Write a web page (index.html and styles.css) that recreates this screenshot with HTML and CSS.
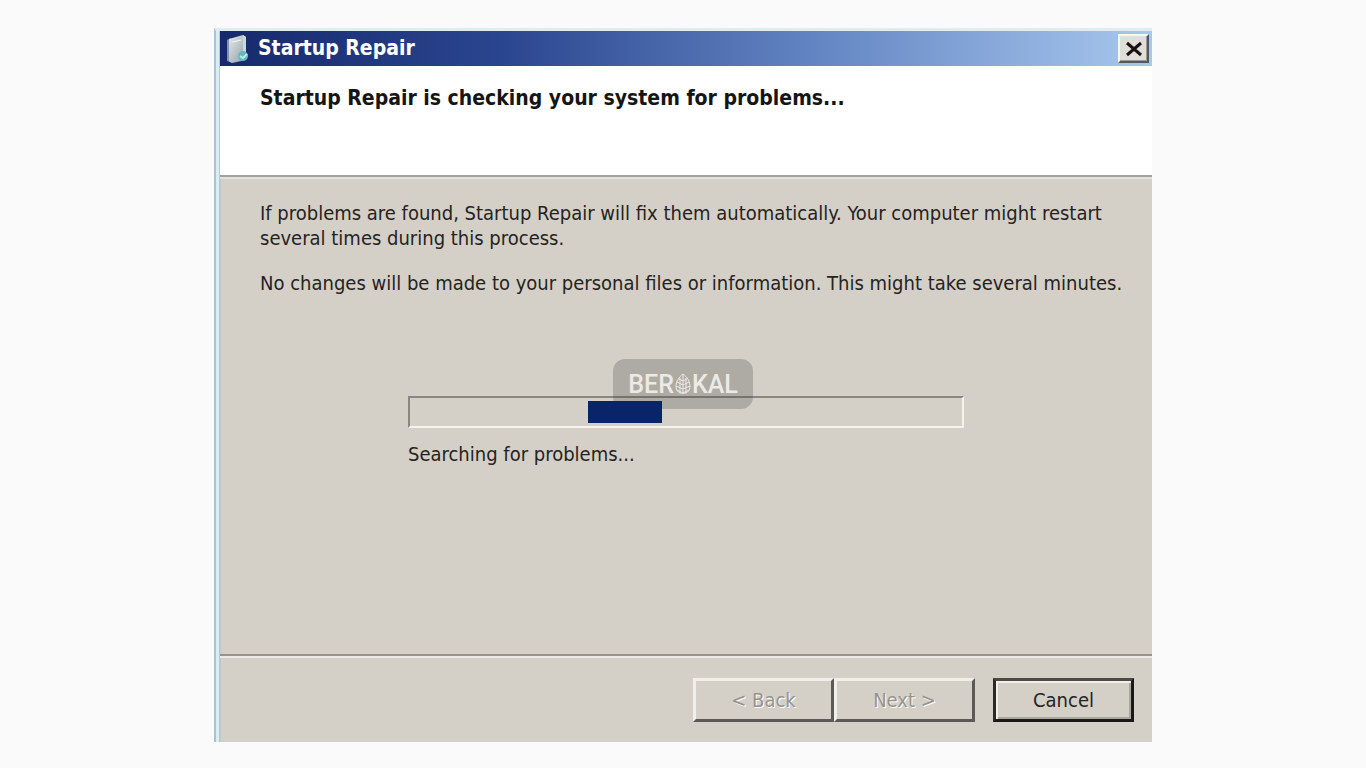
FILE: index.html
```html
<!DOCTYPE html>
<html lang="en">
<head>
    <meta charset="UTF-8">
    <meta name="viewport" content="width=device-width, initial-scale=1.0">
    <title>Startup Repair</title>
    <link rel="stylesheet" href="styles.css">
</head>
<body>
    <main class="window">
        <header class="title-bar">
            <svg class="app-icon" viewBox="0 0 24 30" aria-hidden="true">
                <defs>
                    <linearGradient id="case-front" x1="0" y1="0" x2="1" y2="1">
                        <stop offset="0" stop-color="#e4e9e8"/>
                        <stop offset="1" stop-color="#8f9da8"/>
                    </linearGradient>
                </defs>
                <path d="M1 6 L5 4 L6 29 L1 27 Z" fill="#8093a8"/>
                <path d="M3 5 L17 1 L20 3 L20 26 L6 29 L3 27 Z" fill="url(#case-front)"/>
                <path d="M17 1 L20 3 L20 25 L17 26 Z" fill="#c3dcda"/>
                <path d="M6 8 L15 6" stroke="#f5f7f6" stroke-width="1"/>
                <circle cx="17" cy="22" r="5" fill="#62b9c5"/>
                <path d="M14 22 L17 24 L21 20" fill="none" stroke="#b9eee8" stroke-width="2"/>
            </svg>
            <h1 class="title">Startup Repair</h1>
            <button class="close-btn" type="button" aria-label="Close">
                <svg viewBox="0 0 16 16" aria-hidden="true">
                    <path d="M1 2 L15 14 M15 2 L1 14" stroke="#1a1010" stroke-width="3"/>
                </svg>
            </button>
        </header>
        <section class="banner">
            <h2>Startup Repair is checking your system for problems...</h2>
        </section>
        <section class="content">
            <p>If problems are found, Startup Repair will fix them automatically. Your computer might restart several times during this process.</p>
            <p>No changes will be made to your personal files or information. This might take several minutes.</p>
            <div class="status">
                <div class="progress" role="progressbar" aria-labelledby="status-text">
                    <div class="progress-chunk"></div>
                </div>
                <p id="status-text">Searching for problems...</p>
            </div>
        </section>
        <footer class="actions">
            <div class="wizard-nav">
                <button class="btn" type="button" disabled>&lt; Back</button>
                <button class="btn" type="button" disabled>Next &gt;</button>
            </div>
            <button class="btn btn-default" type="button">Cancel</button>
        </footer>
    </main>
    <div class="watermark">
        <span>BER</span>
        <svg viewBox="0 0 18 22" aria-hidden="true">
            <g fill="none" stroke="currentColor" stroke-width="1">
                <path d="M9 1 C5 4 2 8 2 14 C2 17 4 19 6 20 H12 C14 19 16 17 16 14 C16 8 13 4 9 1 Z"/>
                <path d="M9 1 V21 M6 5 V20 M12 5 V20"/>
                <path d="M9 8 L5 6 M9 8 L13 6 M9 12 L3 9 M9 12 L15 9 M9 16 L2 13 M9 16 L16 13 M9 20 L3 17 M9 20 L15 17"/>
            </g>
        </svg>
        <span>KAL</span>
    </div>
</body>
</html>
```

FILE: styles.css
```css
* {
    box-sizing: border-box;
}
body {
    display: flex;
    flex-direction: column;
    align-items: center;
    min-height: 100vh;
    margin: 0;
    padding: 28px 16px 26px;
    background-color: #fafafa;
    color: #26231f;
    font-family: Tahoma, "DejaVu Sans Condensed", "DejaVu Sans", sans-serif;
    font-stretch: condensed;
    font-size: 20px;
    line-height: 25px;
}
h1, h2, p {
    margin: 0;
}
button {
    font: inherit;
    color: inherit;
}
.window {
    display: flex;
    flex: 1;
    flex-direction: column;
    width: 100%;
    max-width: 938px;
    background-color: #d4d0c8;
    border-top: 3px solid #dfedf3;
    border-left: 2px solid #a9c3d6;
    box-shadow: inset 3px 0 #dcecf3, inset 5px 0 #b8cccf;
    padding-left: 4px;
}

/* Title bar */
.title-bar {
    display: flex;
    align-items: center;
    gap: 8px;
    height: 35px;
    padding: 0 3px 0 6px;
    background: linear-gradient(to right, #16296c, #2a458f 30%, #6587c4 65%, #a8c8ee);
    color: #fff;
}
.app-icon {
    width: 24px;
    height: 30px;
}
.title {
    flex: 1;
    font-size: 21px;
}
.close-btn {
    display: flex;
    align-items: center;
    justify-content: center;
    width: 31px;
    height: 29px;
    padding: 0;
    background-color: #e0ded9;
    border: 2px solid;
    border-color: #f6f6f3 #55585f #55585f #f6f6f3;
    box-shadow: inset -1px -1px #9a9a98;
}
.close-btn svg {
    width: 16px;
    height: 16px;
}

.banner {
    min-height: 111px;
    padding: 20px 40px;
    background-color: #fff;
    border-bottom: 2px solid #a3a09a;
}
.banner h2 {
    color: #151515;
    font-size: 21px;
}

/* Content */
.content {
    display: flex;
    flex: 1;
    flex-direction: column;
    gap: 20px;
    padding: 22px 24px 22px 40px;
    border-top: 2px solid #e4e1db;
}
.status {
    display: flex;
    flex-direction: column;
    gap: 14px;
    width: 64%;
    margin: 80px 0 0 148px;
}
.progress {
    height: 32px;
    padding: 3px 0 3px 32%;
    border: 2px solid;
    border-color: #8a8780 #f5f3ef #f5f3ef #8a8780;
}
.progress-chunk {
    position: relative;
    z-index: 2;
    width: 74px;
    height: 22px;
    background-color: #0a246a;
}

/* Buttons */
.actions {
    display: flex;
    justify-content: flex-end;
    gap: 18px;
    padding: 22px 18px 20px;
    border-top: 2px solid #96938c;
    box-shadow: inset 0 2px #eceae4;
}
.wizard-nav {
    display: flex;
}
.btn {
    width: 141px;
    height: 44px;
    padding: 0;
    background-color: #d4d0c8;
    border: 3px solid;
    border-color: #f1efea #5c5a54 #5c5a54 #f1efea;
}
.btn:disabled {
    color: #96938c;
    text-shadow: 1px 1px #fff;
}
.btn-default {
    border-color: #4c4a45 #1a1917 #1a1917 #2c2a27;
    box-shadow: inset 2px 2px #f1efea, inset -2px -2px #aaa79f;
}

.watermark {
    position: absolute;
    top: 50%;
    left: 50%;
    transform: translate(-50%, -50%);
    display: flex;
    align-items: center;
    justify-content: center;
    width: 140px;
    height: 50px;
    border-radius: 12px;
    background-color: rgba(60, 60, 55, 0.25);
    color: #eceae5;
    font-family: Roboto, sans-serif;
    font-stretch: normal;
    font-size: 25px;
    font-weight: 500;
}
.watermark svg {
    width: 18px;
    height: 22px;
}
```
